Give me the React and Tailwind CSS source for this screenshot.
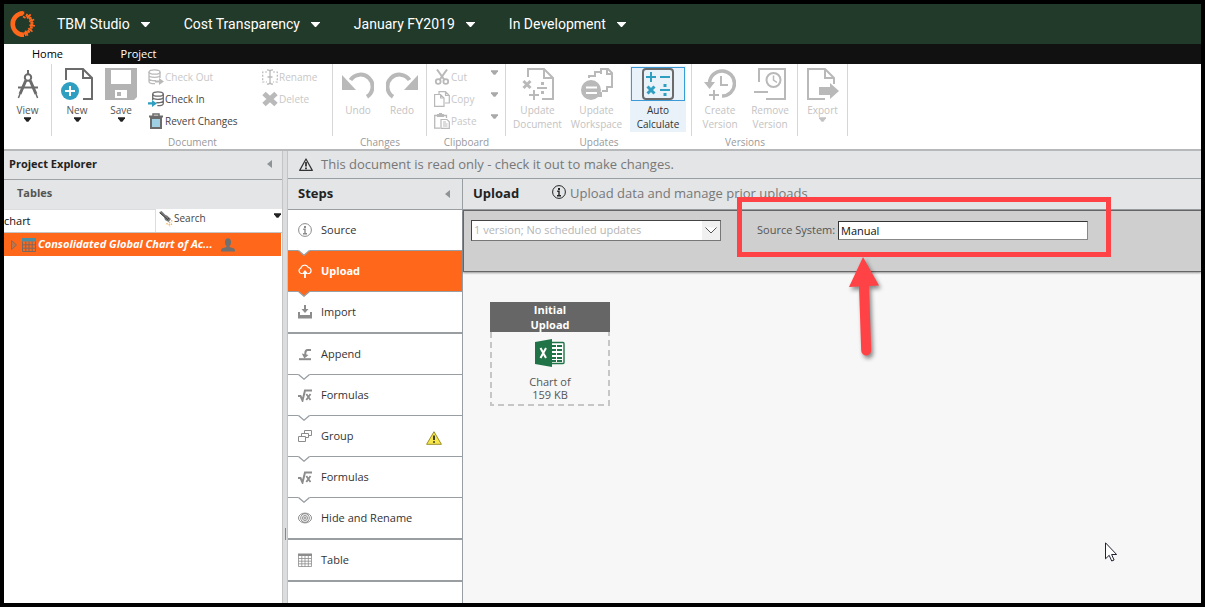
import React from 'react';

const GREY = '#b9b9b9';
const DARK = '#6b6b6b';
const TEAL = '#2f9fc1';

// Small filled triangle used by menus and panel headers
function Caret({ className = '' }) {
    return (
        <svg viewBox="0 0 8 5" className={`shrink-0 ${className}`} fill="currentColor" aria-hidden="true">
            <path d="M0 0h8v1L5 5H3L0 1z" />
        </svg>
    );
}

function CollapseArrow() {
    return (
        <svg viewBox="0 0 5 8" className="w-[5px] h-2" fill="#8f9396" aria-hidden="true">
            <path d="M5 0v8L0 4z" />
        </svg>
    );
}

function Logo() {
    const rays = [-62, -48, -34, -20, -6, 8, 22, 36, 50, 64];
    return (
        <svg viewBox="0 0 28 28" className="w-7 h-7" fill="none" stroke="#ff671b" aria-hidden="true">
            <path d="M15 3.2A10.8 10.8 0 1 0 16 24.8" strokeWidth="4.6" />
            {rays.map((r, i) => (
                <g key={r} transform={`rotate(${r} 14 14)`}>
                    <path d={i % 2 ? 'M21.5 14h5.5' : 'M22.5 14h3'} strokeWidth="1.7" />
                    <path d="M22.5 15.6h2.5" strokeWidth="1.4" />
                </g>
            ))}
            <path d="M15 6.5l2.5 1.5M15.5 1.5v3M17 22l1 4" strokeWidth="1.5" />
        </svg>
    );
}

/* ---- large ribbon icons, 32 x 32 ---- */

function BigIcon({ children }) {
    return (
        <svg viewBox="0 0 32 32" className="w-8 h-8 shrink-0" fill="none" aria-hidden="true">
            {children}
        </svg>
    );
}

const ViewIcon = () => (
    <BigIcon>
        <g stroke={DARK}>
            <path d="M16 2v4" strokeWidth="2" />
            <circle cx="16" cy="9.5" r="3.2" strokeWidth="2" />
            <path d="M13.8 12.5L8 26M18.2 12.5L24 26" strokeWidth="3" />
            <path d="M8 26l-1.6 4M24 26l1.6 4" strokeWidth="1.5" />
            <path d="M6 19.5h20" strokeWidth="2" />
        </g>
    </BigIcon>
);

const NewIcon = () => (
    <BigIcon>
        <path d="M5 12V1h17l9 9v21h-4M22 1v9h9" stroke={DARK} strokeWidth="2" />
        <path d="M22 31h9" stroke={DARK} strokeWidth="2" />
        <circle cx="9" cy="23" r="11" fill="#fff" />
        <circle cx="9" cy="23" r="9" fill={TEAL} />
        <path d="M4 23h10M9 18v10" stroke="#fff" strokeWidth="2" />
    </BigIcon>
);

const SaveIcon = () => (
    <BigIcon>
        <path d="M0 0h32v29l-3 3H0z" fill="#b3b3b3" />
        <path d="M6 2h20v14H6zM10 22h12v8H10z" fill="#fff" />
        <path d="M12 24h4v4h-4z" fill="#b3b3b3" />
    </BigIcon>
);

const UndoIcon = () => (
    <BigIcon>
        <path d="M8.500 12A12 12 0 1 1 25 28.700" stroke={GREY} strokeWidth="4" />
        <path d="M0 7l14 15H0z" fill={GREY} />
    </BigIcon>
);

const RedoIcon = () => (
    <BigIcon>
        <path d="M23.500 12A12 12 0 1 0 7 28.700" stroke={GREY} strokeWidth="4" />
        <path d="M32 7L18 22h14z" fill={GREY} />
    </BigIcon>
);

const UpdateDocumentIcon = () => (
    <BigIcon>
        <g stroke={GREY} strokeWidth="2">
            <path d="M6 9V1h16l9 9v21H20" />
            <path d="M22 1v9h9" />
            <path d="M1.5 13l7 7M8.5 13l-7 7" strokeWidth="3" />
            <path d="M15 20h10M7 27h10M12 22v10" />
        </g>
        <path d="M19 14h3v3h-3zM19 23h3v3h-3z" fill={GREY} />
    </BigIcon>
);

const UpdateWorkspaceIcon = () => (
    <BigIcon>
        <g stroke={GREY} strokeWidth="2">
            <path d="M8 10V8h6M14 9V4h6M20 6V1h7l4 4v14h-5" />
            <path d="M26 1v5h5M26 18v5h-5M20 24v4h-3" />
        </g>
        <circle cx="10" cy="22" r="10" fill={GREY} />
        <path d="M5 19.5h11M5 25h11" stroke="#fff" strokeWidth="2" />
    </BigIcon>
);

const AutoCalculateIcon = () => (
    <BigIcon>
        <rect x="1" y="1" width="30" height="30" rx="3" stroke={DARK} strokeWidth="2" />
        <g stroke={TEAL} strokeWidth="2">
            <path d="M4 9h10M9 4v10M18 9h10M18 22h10" />
            <path d="M5.5 18.5l7 7M12.5 18.5l-7 7" strokeWidth="3" />
        </g>
        <path d="M21.5 16h3v3h-3zM21.5 25h3v3h-3z" fill={TEAL} />
    </BigIcon>
);

const CreateVersionIcon = () => (
    <BigIcon>
        <path d="M5.5 15A12.5 12.5 0 1 1 18 28" stroke={GREY} strokeWidth="3.5" />
        <path d="M0 14h11l-5.5 7z" fill={GREY} />
        <path d="M17 8v9h7M5 27h10M10 22v10" stroke={GREY} strokeWidth="2" />
    </BigIcon>
);

const RemoveVersionIcon = () => (
    <BigIcon>
        <g stroke={GREY} strokeWidth="2">
            <path d="M5 14V1h26v30H12" />
            <circle cx="19.5" cy="12" r="7" />
            <path d="M19.5 7.5v4.5l3.5 2.5" strokeWidth="1.5" />
            <path d="M0 24h14" />
        </g>
    </BigIcon>
);

const ExportIcon = () => (
    <BigIcon>
        <g stroke={GREY} strokeWidth="2">
            <path d="M27 16v-6l-9-9H1v30h17" />
            <path d="M18 1v9h9" />
        </g>
        <path d="M12 19h11v-4l9 8-9 8v-4H12z" fill={GREY} />
    </BigIcon>
);

/* ---- small ribbon icons, 16 x 16 ---- */

function SmallIcon({ children }) {
    return (
        <svg viewBox="0 0 16 16" className="w-4 h-4 shrink-0" fill="none" aria-hidden="true">
            {children}
        </svg>
    );
}

const CheckOutIcon = () => (
    <SmallIcon>
        <g stroke={GREY} strokeWidth="1.3">
            <ellipse cx="6.5" cy="3" rx="5.5" ry="2.2" />
            <path d="M1 3v9.5c0 1.2 2.5 2.2 6 2.2M12 3v6M1 6.2c0 2.8 11 2.8 11 0M1 9.4c0 2 4 2.6 7 2.2" />
        </g>
        <path d="M7 11.5h4V9l5 3.5-5 3.5v-2.5H7z" fill={GREY} />
    </SmallIcon>
);

const CheckInIcon = () => (
    <SmallIcon>
        <g stroke={DARK} strokeWidth="1.3">
            <ellipse cx="10" cy="3" rx="5.3" ry="2.2" />
            <path d="M4.7 3v6M15.3 3v9.5c0 1.2-2.5 2.2-6 2.2M4.7 6.2c0 2.8 10.6 2.8 10.6 0M15.3 9.4c0 2-4 2.6-7 2.2" />
        </g>
        <path d="M0 11.2h4V9l5 3.5L4 16v-2.5H0z" fill={TEAL} />
    </SmallIcon>
);

const TrashIcon = () => (
    <SmallIcon>
        <path d="M3 5h10v10H3z" fill="#fff" stroke={DARK} strokeWidth="2" />
        <path d="M4 6h8v8H4z" fill="#9fd0e3" />
        <path d="M1 3.5h14" stroke={DARK} strokeWidth="2" />
        <path d="M5 3V1h6v2" stroke={DARK} strokeWidth="1.5" />
    </SmallIcon>
);

const RenameIcon = () => (
    <SmallIcon>
        <path d="M5 3H.7v10H5M11 3h4.3v10H11" stroke={GREY} strokeWidth="1.2" strokeDasharray="2 1.5" />
        <path d="M5 .8c1.5 0 3 .5 3 1.7v11c0 1.2-1.5 1.7-3 1.7M11 .8c-1.5 0-3 .5-3 1.7v11c0 1.2 1.5 1.7 3 1.7M5.5 8h5" stroke={GREY} strokeWidth="1.3" />
    </SmallIcon>
);

const DeleteIcon = () => (
    <SmallIcon>
        <path d="M2 2.5l12 11M14 2.5l-12 11" stroke={GREY} strokeWidth="5" />
    </SmallIcon>
);

const CutIcon = () => (
    <SmallIcon>
        <g stroke={GREY}>
            <circle cx="4.2" cy="12.5" r="2.4" strokeWidth="1.8" />
            <circle cx="11.8" cy="12.5" r="2.4" strokeWidth="1.8" />
            <path d="M3 .5l7.5 10.500M13 .5L5.500 11" strokeWidth="2" />
        </g>
    </SmallIcon>
);

const CopyIcon = () => (
    <SmallIcon>
        <g stroke={GREY} strokeWidth="1.2" fill="#fff">
            <path d="M5 3V.6h6.5l3.800 3.800V12H11M11.500.6v3.800h3.800" />
            <path d="M.6 3.5h6L10 7v8.400H.6zM6.600 3.500V7H10" />
        </g>
    </SmallIcon>
);

const PasteIcon = () => (
    <SmallIcon>
        <path d="M6 15.2H.7V2.5H3M10 2.5h2.5V5" stroke={GREY} strokeWidth="1.3" />
        <path d="M3 1h2V0h3v1h2v3H3z" fill={GREY} />
        <path d="M7 6.5h6l2.3 2.3v6.500H7zM9 9h3M9 11h4.500M9 13h4.500" stroke={GREY} strokeWidth="1.2" />
    </SmallIcon>
);

/* ---- step icons, 14 x 14 ---- */

function StepIcon({ children }) {
    return (
        <svg viewBox="0 0 14 14" className="w-3.5 h-3.5 shrink-0" fill="none" stroke="#8c8c8c" aria-hidden="true">
            {children}
        </svg>
    );
}

const InfoGlyph = () => (
    <>
        <circle cx="7" cy="7" r="6.4" strokeWidth="1" />
        <path d="M7 3v2" strokeWidth="2" />
        <path d="M5.2 6.3H7v4.400M5 10.700h4" strokeWidth="1.4" />
    </>
);

const UploadGlyph = () => (
    <g stroke="#fff">
        <path d="M4.2 9.500H3.200A2.700 2.700 0 0 1 2.800 4.300 4 4 0 0 1 10.300 3.500 3.100 3.100 0 0 1 11 9.500H9.800" strokeWidth="1.2" />
        <path d="M7 14V8.5" strokeWidth="1.8" />
        <path d="M3.8 10L7 6l3.200 4z" fill="#fff" stroke="none" />
    </g>
);

const ImportGlyph = () => (
    <g fill="#8c8c8c" stroke="none">
        <path d="M6 0h2v4h2.5L7 8 3.5 4H6z" />
        <path d="M0 7h2v3h10V7h2v6.5H0z" />
    </g>
);

const AppendGlyph = () => (
    <>
        <path d="M1 12.2h12" strokeWidth="2" />
        <path d="M13 3H9.5C7.8 3 7.3 4 7.3 6.5V8" strokeWidth="2" />
        <path d="M3.8 6.5L10.5 8l-4.2 3.5z" fill="#8c8c8c" stroke="none" />
    </>
);

const FormulaGlyph = () => (
    <>
        <path d="M0 8h2.5l2 4.5L7 2.5h7" strokeWidth="2" />
        <path d="M8.3 6l4.2 6M12.5 6l-4.2 6" strokeWidth="1.8" />
    </>
);

const GroupGlyph = () => (
    <g strokeWidth="1" fill="#fff">
        <path d="M6.5 1.5h7v5h-7z" />
        <path d="M3.5 4.5h7v4h-7z" />
        <path d="M.5 7.5h7v5h-7z" />
    </g>
);

const EyeGlyph = () => (
    <g strokeWidth="1">
        <ellipse cx="7" cy="7" rx="6.5" ry="4.9" />
        <circle cx="7" cy="7" r="4.3" />
        <circle cx="7" cy="7" r="2.5" />
        <circle cx="7" cy="7" r="1" />
    </g>
);

const TableGlyph = () => (
    <>
        <path d="M.5 2.5h13v11H.5zM3.8 3v10.5M7 3v10.5M10.3 3v10.5M.5 5.5h13M.5 8.2h13M.5 10.8h13" strokeWidth=".8" />
        <path d="M0 .5h14v2.5H0z" fill="#8c8c8c" stroke="none" />
    </>
);

const MENUS = ['TBM Studio', 'Cost Transparency', 'January FY2019', 'In Development'];

const STEPS = [
    { name: 'Source', icon: InfoGlyph, notch: true },
    { name: 'Upload', icon: UploadGlyph, notch: true, active: true },
    { name: 'Import', icon: ImportGlyph },
    { name: 'Append', icon: AppendGlyph, notch: true },
    { name: 'Formulas', icon: FormulaGlyph, notch: true },
    { name: 'Group', icon: GroupGlyph, notch: true, warning: true },
    { name: 'Formulas', icon: FormulaGlyph, notch: true },
    { name: 'Hide and Rename', icon: EyeGlyph },
    { name: 'Table', icon: TableGlyph },
];

function RibbonGroup({ label, children }) {
    return (
        <section className="flex flex-col">
            <div className="flex h-[72px] pt-0.5 border-r border-[#d6d6d6]">{children}</div>
            <p className="h-[13px] text-center leading-[13px] text-[#999]">{label}</p>
        </section>
    );
}

function BigButton({ icon: Icon, lines, width, disabled, caret, muted }) {
    return (
        <button type="button" disabled={disabled} className={`flex flex-col items-center pt-0.5 ${width} ${disabled ? 'text-[#c3c3c3]' : 'text-[#555]'}`}>
            <Icon />
            <span className="pt-[3px] leading-[14px]">
                {lines.map((line) => <span key={line} className="block">{line}</span>)}
            </span>
            {caret && <Caret className={`w-[7px] h-[5px] ${muted ? '' : 'text-[#222]'}`} />}
        </button>
    );
}

function SmallButton({ icon: Icon, label, disabled }) {
    return (
        <button type="button" disabled={disabled} className={`flex items-center gap-px h-[22px] ${disabled ? 'text-[#c8c8c8]' : 'text-[#444]'}`}>
            <Icon />
            {label}
        </button>
    );
}

function Ribbon() {
    return (
        <div className="flex h-[87px] bg-white border-b-2 border-[#b7b8ba] text-[10px] relative z-10">
            <RibbonGroup>
                <BigButton icon={ViewIcon} lines={['View']} width="w-[47px]" caret />
            </RibbonGroup>
            <RibbonGroup label="Document">
                <div className="flex w-[280px] pl-[3px]">
                    <BigButton icon={NewIcon} lines={['New']} width="w-11" caret />
                    <BigButton icon={SaveIcon} lines={['Save']} width="w-11" caret />
                    <div className="w-[114px] ml-[5px]">
                        <SmallButton icon={CheckOutIcon} label="Check Out" disabled />
                        <SmallButton icon={CheckInIcon} label="Check In" />
                        <SmallButton icon={TrashIcon} label="Revert Changes" />
                    </div>
                    <div>
                        <SmallButton icon={RenameIcon} label="Rename" disabled />
                        <SmallButton icon={DeleteIcon} label="Delete" disabled />
                    </div>
                </div>
            </RibbonGroup>
            <RibbonGroup label="Changes">
                <div className="flex pl-[3px] pr-0.5">
                    <BigButton icon={UndoIcon} lines={['Undo']} width="w-11" disabled />
                    <BigButton icon={RedoIcon} lines={['Redo']} width="w-11" disabled />
                </div>
            </RibbonGroup>
            <RibbonGroup label="Clipboard">
                <div className="w-[78px] px-[7px]">
                    {[['Cut', CutIcon], ['Copy', CopyIcon], ['Paste', PasteIcon]].map(([label, icon]) => (
                        <div key={label} className="flex justify-between">
                            <SmallButton icon={icon} label={label} disabled />
                            <button type="button" disabled aria-label={`${label} options`} className="pb-2.5 text-[#a9a9a9]">
                                <Caret className="w-[7px] h-[5px]" />
                            </button>
                        </div>
                    ))}
                </div>
            </RibbonGroup>
            <RibbonGroup label="Updates">
                <div className="flex w-[185px] pl-0.5">
                    <BigButton icon={UpdateDocumentIcon} lines={['Update', 'Document']} width="w-[59px]" disabled />
                    <BigButton icon={UpdateWorkspaceIcon} lines={['Update', 'Workspace']} width="w-[59px]" disabled />
                    <button type="button" className="flex flex-col items-center w-14 h-[66px] ml-1 pt-px px-px bg-[#e9f2f9] text-[#333]">
                        <span className="flex justify-center w-full border border-[#3c9bd6]"><AutoCalculateIcon /></span>
                        <span className="pt-0.5 leading-[14px]">
                            <span className="block">Auto</span>
                            <span className="block">Calculate</span>
                        </span>
                    </button>
                </div>
            </RibbonGroup>
            <RibbonGroup label="Versions">
                <div className="flex pl-[3px] pr-0.5">
                    <BigButton icon={CreateVersionIcon} lines={['Create', 'Version']} width="w-[50px]" disabled />
                    <BigButton icon={RemoveVersionIcon} lines={['Remove', 'Version']} width="w-[50px]" disabled />
                </div>
            </RibbonGroup>
            <RibbonGroup>
                <BigButton icon={ExportIcon} lines={['Export']} width="w-[49px]" disabled caret muted />
            </RibbonGroup>
        </div>
    );
}

function ProjectExplorer() {
    return (
        <aside className="flex flex-col w-[278px] shrink-0 bg-white">
            <h2 className="flex items-center justify-between h-[29px] pl-[5px] pr-2.5 pb-0.5 bg-[#e3e5e7] border-b border-[#9fa3a6] text-[11px] font-bold text-[#222]">
                Project Explorer
                <CollapseArrow />
            </h2>
            <h3 className="h-[29px] pl-[13px] bg-[#e3e5e7] text-[11px] leading-[26px] font-bold text-[#555]">Tables</h3>
            <div className="flex h-6 border-b border-[#c5c5c5]">
                <input aria-label="Filter tables" defaultValue="chart" className="w-[152px] border-r border-t border-[#ddd] text-[11px] text-[#111] outline-none" />
                <button type="button" className="flex flex-1 items-start pt-0.5 pl-0.5 pr-px text-[10px] text-[#444]">
                    <svg viewBox="0 0 16 16" className="w-4 h-4" fill="none" aria-hidden="true">
                        <path d="M1 1.5L3.500 0l4 4L9 4.500l4 3.500-2.500 3L7 9 6 6z" fill="#777" />
                        <path d="M2 2l7 6M9 9l2-2" stroke="#444" />
                        <path d="M11 11l3 3M13 9.500l2 1M9 12v2.500M11 13l1 2.500" stroke="#f2b35c" strokeWidth="1.3" strokeDasharray="1.500 1" />
                    </svg>
                    Search
                    <Caret className="w-[7px] h-[5px] ml-auto mt-0.5 text-[#222]" />
                </button>
            </div>
            <button type="button" className="flex items-center h-[23px] mr-px pl-[7px] bg-[#ff671b] text-[11px] font-bold italic text-white">
                <svg viewBox="0 0 6 10" className="w-1.5 h-2.5 mr-[5px]" aria-hidden="true">
                    <path d="M.5.5v9l5-4.5z" fill="#b8764f" stroke="#94684f" />
                </svg>
                <svg viewBox="0 0 14 14" className="w-3.5 h-3.5 mr-0.5" fill="none" aria-hidden="true">
                    <path d="M0 0h14v3.5H0z" fill="#4c8fa3" />
                    <path d="M.5 3.5v10h13v-10M3.8 3.5v10M7 3.5v10M10.2 3.5v10M.5 6.8h13M.5 10.2h13" stroke="#7b6a60" />
                </svg>
                Consolidated Global Chart of Ac...
                <svg viewBox="0 0 14 14" className="w-3.5 h-3.5 ml-2" fill="#707070" aria-hidden="true">
                    <ellipse cx="7" cy="4.2" rx="3" ry="3.9" />
                    <path d="M5.500 7h3v2l4 1.200c1 .4 1.500 1 1.500 3.300H0c0-2.300.5-2.900 1.500-3.300l4-1.200z" />
                </svg>
            </button>
        </aside>
    );
}

function Step({ step, thick }) {
    const Glyph = step.icon;
    return (
        <li className={`relative border-[#989ea2] ${thick ? 'border-b-2' : 'border-b'}`}>
            <button type="button" className={`flex items-center w-full h-10 pl-2.5 text-[11px] ${step.active ? 'bg-[#ff671b] text-white font-bold' : 'bg-white text-[#333]'}`}>
                <StepIcon><Glyph /></StepIcon>
                <span className="pl-[9px]">{step.name}</span>
                {step.warning && (
                    <svg viewBox="0 0 16 14" className="w-4 h-3.5 ml-auto mr-5 mt-1" aria-label="Warning">
                        <path d="M8 .7L15.4 13.300H.6z" fill="#f6e64a" stroke="#9a8f2a" strokeLinejoin="round" />
                        <path d="M8 4.5v4.500M8 10.200v1.600" stroke="#222" strokeWidth="1.7" />
                    </svg>
                )}
            </button>
            {step.notch && (
                <svg viewBox="0 0 12 6" className="absolute left-2.5 top-10 w-3 h-1.5 z-10" aria-hidden="true">
                    <path d="M0 0h12L6 5.500z" fill={step.active ? '#ff671b' : '#fff'} />
                    <path d="M.5.5L6 5.200 11.500.500" fill="none" stroke="#989ea2" strokeWidth="1.3" />
                </svg>
            )}
        </li>
    );
}

function StepsPanel() {
    return (
        <nav className="w-[175px] shrink-0 bg-white border-r border-[#989ea2]">
            <h2 className="flex items-center justify-between h-[31px] pl-2.5 pr-3 bg-[#e3e5e7] border-b border-[#989ea2] text-[13px] font-bold text-[#222]">
                Steps
                <CollapseArrow />
            </h2>
            <ul>
                {STEPS.map((step, i) => <Step key={i} step={step} thick={!step.notch} />)}
            </ul>
        </nav>
    );
}

// Red frame and arrow drawn over the Source System field
function Callout() {
    return (
        <>
            <div className="absolute -left-5 -right-[23px] -top-6 h-[60px] border-[5px] border-[#ff4246] z-20 pointer-events-none" />
            <svg viewBox="0 0 40 108" className="absolute left-[87px] top-9 w-10 h-[108px] z-20 pointer-events-none drop-shadow-[2px_3px_2px_rgba(0,0,0,0.45)]" aria-hidden="true">
                <path d="M19 0l16 28.5-10 .5 2.200 64a5 5 0 0 1-10 .8L15 29.500l-10 .5z" fill="#ff4246" />
            </svg>
        </>
    );
}

function UploadPanel() {
    return (
        <main className="flex-1 min-w-0 flex flex-col bg-[#f7f7f7]">
            <header className="flex items-center h-[31px] pl-2.5 bg-[#e3e5e7] border-b border-[#989ea2]">
                <h2 className="w-[79px] text-[13px] font-bold text-[#222]">Upload</h2>
                <svg viewBox="0 0 14 14" className="w-3.5 h-3.5 mb-1 mr-1" fill="none" stroke="#222" aria-hidden="true"><InfoGlyph /></svg>
                <p className="text-[13px] text-[#777]">Upload data and manage prior uploads</p>
            </header>
            <div className="flex items-start h-[62px] pl-[7px] pt-[9px] bg-[#cfcfcf] border border-r-0 border-[#666] shadow-[0_1px_2px_rgba(0,0,0,0.4)]">
                <div className="relative w-[250px] shrink-0">
                    <select aria-label="Version" className="block w-full h-[21px] pl-0.5 appearance-none bg-white border border-t-[#444] border-l-[#444] border-r-[#777] border-b-[#777] text-[11px] text-[#b5b5b5] outline-none">
                        <option>1 version; No scheduled updates</option>
                    </select>
                    <span className="absolute right-px top-px flex items-center justify-center w-[18px] h-[19px] bg-[#f0f0f0] pointer-events-none">
                        <svg viewBox="0 0 12 7" className="w-3 h-[7px]" fill="#fff" stroke="#555" aria-hidden="true">
                            <path d="M.5.5L6 6l5.500-5.500" />
                        </svg>
                    </span>
                </div>
                <div className="relative flex items-center ml-9 mt-px">
                    <label htmlFor="source-system" className="w-[81px] text-[11px] text-[#555] whitespace-nowrap">Source System:</label>
                    <input id="source-system" defaultValue="Manual" className="w-[250px] h-[19px] pl-0.5 bg-white border border-t-[#333] border-l-[#333] border-r-[#888] border-b-[#888] text-[11px] text-[#111] outline-none" />
                    <Callout />
                </div>
            </div>
            <div className="flex-1 pt-[30px] pl-[27px]">
                <article className="w-[120px] text-center text-[11px]">
                    <h3 className="h-[30px] px-8 bg-[#666] font-bold leading-[15px] text-white">Initial Upload</h3>
                    <div className="relative flex flex-col items-center h-[74px] pt-[7px] leading-[13px] text-[#555]">
                        <svg className="absolute inset-0 w-full h-full" fill="none" stroke="#c6c6c6" strokeWidth="2" strokeDasharray="6 4" aria-hidden="true">
                            <path d="M1 0v73h118V0" />
                        </svg>
                        <svg viewBox="0 0 30 28" className="w-[30px] h-7 mb-2" aria-hidden="true">
                            <rect x="15" y="3.5" width="14" height="21" rx="1" fill="#fff" stroke="#207347" strokeWidth="1.4" />
                            <path d="M17 7h4M17 11h4M17 15h4M17 19h4M17 22h4M22 7h5M22 11h5M22 15h5M22 19h5M22 22h5" stroke="#207347" strokeWidth="2" />
                            <path d="M0 3l17-3v28L0 25z" fill="#207347" />
                            <path d="M5.5 9l5.500 10M11 9L5.500 19" stroke="#fff" strokeWidth="2" />
                        </svg>
                        <p>Chart of</p>
                        <p>159 KB</p>
                    </div>
                </article>
            </div>
        </main>
    );
}

export default function App() {
    return (
        <div className="relative flex flex-col min-h-screen border-4 border-black bg-white font-['Open_Sans',sans-serif]">
            <header className="flex items-center h-10 pl-1 bg-[#213a2a] text-white font-[Roboto,sans-serif] text-[14px]">
                <a href="#home" aria-label="Home" className="mr-[21px]"><Logo /></a>
                <nav className="flex gap-[34px]">
                    {MENUS.map((menu) => (
                        <button key={menu} type="button" className="flex items-center gap-[11px]">
                            {menu}
                            <svg viewBox="0 0 9 5" className="w-[9px] h-[5px]" fill="#fff" aria-hidden="true"><path d="M0 0h9v.5L5 5H4L0 .5z" /></svg>
                        </button>
                    ))}
                </nav>
            </header>
            <div className="flex h-5 bg-[#111] text-[11px]">
                <button type="button" className="w-[87px] bg-white text-black">Home</button>
                <button type="button" className="w-[95px] text-white">Project</button>
            </div>
            <Ribbon />
            <div className="flex flex-1">
                <ProjectExplorer />
                <div className="relative w-1.5 shrink-0 bg-[#dcdddf] border-l border-r border-[#c4c4c4]">
                    <div className="absolute left-0.5 bottom-[63px] w-px h-3 bg-[#888]" />
                </div>
                <div className="flex flex-col flex-1 min-w-0">
                    <div className="flex items-center h-7 pl-[11px] gap-2 bg-[#e3e5e7] border-b border-[#989ea2] text-[13px] text-[#777]">
                        <svg viewBox="0 0 14 13" className="w-3.5 h-[13px]" fill="none" stroke="#333" aria-hidden="true">
                            <path d="M7 1l6.3 11.400H.7z" strokeWidth="1.2" strokeLinejoin="round" />
                            <path d="M7 4v4.500M7 9.500v1.700" strokeWidth="1.8" />
                        </svg>
                        <p>This document is read only - check it out to make changes.</p>
                    </div>
                    <div className="flex flex-1">
                        <StepsPanel />
                        <UploadPanel />
                    </div>
                </div>
            </div>
            {/* Mouse pointer */}
            <svg viewBox="0 0 12 20" className="absolute left-[1101px] top-[538px] w-3 h-5" aria-hidden="true">
                <path d="M.5.8v16l3.700-3.500 2.500 5.700 2.400-1-2.500-5.500h5z" fill="#fff" stroke="#223" />
            </svg>
        </div>
    );
}
